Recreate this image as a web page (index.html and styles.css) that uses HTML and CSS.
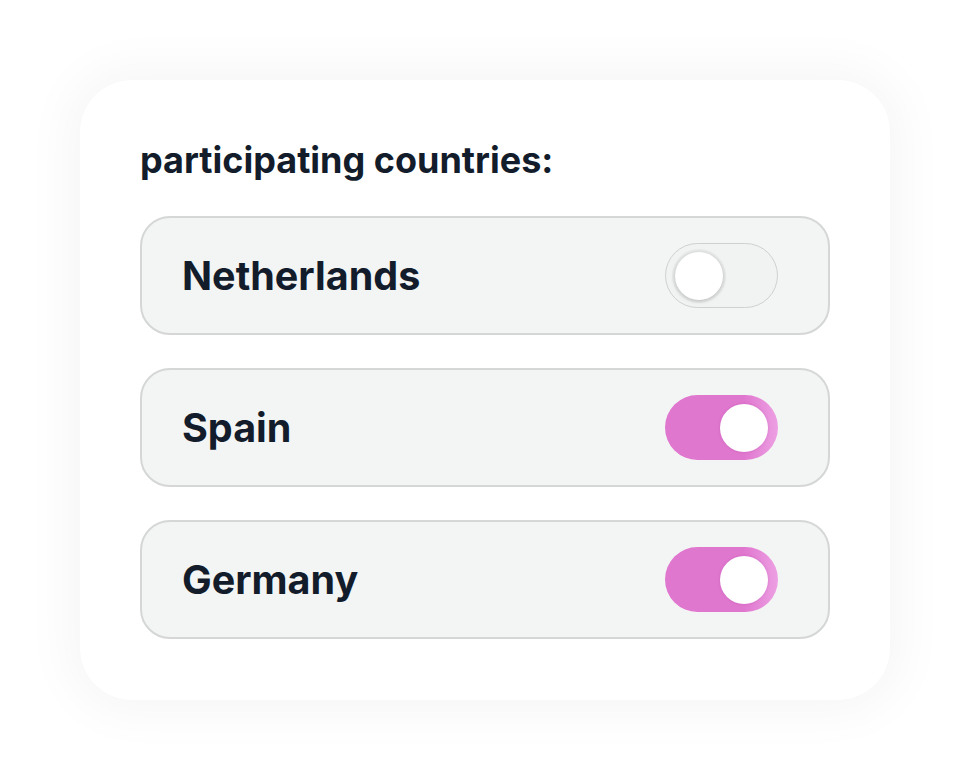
FILE: index.html
```html
<!DOCTYPE html>
<html>
<head>
<meta charset="utf-8">
<link rel="stylesheet" href="styles.css">
</head>
<body>
<div class="page">
  <div class="card">
    <h2 class="title">participating countries:</h2>
    <div class="list">
      <div class="row">
        <span class="label">Netherlands</span>
        <span class="toggle"><span class="knob"></span></span>
      </div>
      <div class="row">
        <span class="label">Spain</span>
        <span class="toggle on"><span class="knob"></span></span>
      </div>
      <div class="row">
        <span class="label">Germany</span>
        <span class="toggle on"><span class="knob"></span></span>
      </div>
    </div>
  </div>
</div>
</body>
</html>
```
FILE: styles.css
```css
html, body {
  margin: 0;
  padding: 0;
  background: #ffffff;
}
body {
  font-family: Inter, "Noto Sans", sans-serif;
  color: #131c2b;
}
.page {
  width: 970px;
  height: 780px;
  padding: 80px;
  box-sizing: border-box;
}
.card {
  width: 810px;
  height: 620px;
  box-sizing: border-box;
  background: #ffffff;
  border-radius: 52px;
  box-shadow: 0 0 50px 12px rgba(0, 0, 0, 0.04);
  padding: 56px 60px 60px;
  display: flex;
  flex-direction: column;
}
.title {
  margin: 0;
  font-size: 36px;
  font-weight: 700;
  line-height: 48px;
  letter-spacing: 0;
}
.list {
  margin-top: 32px;
  display: flex;
  flex-direction: column;
  gap: 33px;
}
.row {
  height: 119px;
  box-sizing: border-box;
  border: 2px solid #d5d6d6;
  border-radius: 30px;
  background: #f3f4f4;
  display: flex;
  align-items: center;
  justify-content: space-between;
  padding: 0 50px 0 40px;
}
.label {
  font-size: 39.5px;
  font-weight: 700;
}
.toggle {
  width: 113px;
  height: 65px;
  box-sizing: border-box;
  border-radius: 33px;
  border: 1px solid #cfd0d0;
  background: #f1f2f2;
  display: flex;
  align-items: center;
  padding: 0 9px;
}
.knob {
  width: 48px;
  height: 48px;
  border-radius: 50%;
  background: #ffffff;
  box-shadow: 0 1px 4px rgba(0, 0, 0, 0.22), 0 0 0 3px rgba(0, 0, 0, 0.03);
}
.toggle.on {
  border: none;
  background: linear-gradient(90deg, #e077cf 0%, #e077cf 70%, #eda0e3 100%);
  justify-content: flex-end;
  padding: 0 10px;
}
.toggle.on .knob {
  box-shadow: 0 0 3px rgba(150, 40, 130, 0.25);
}
```
